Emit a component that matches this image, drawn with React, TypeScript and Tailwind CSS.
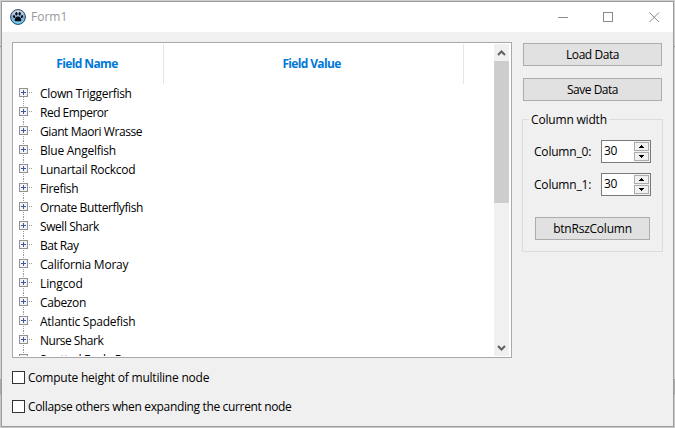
import React from "react";

const FISH = [
  { name: "Clown Triggerfish", cls: "tracking-[-0.31px]" },
  { name: "Red Emperor", cls: "tracking-[-0.5px]" },
  { name: "Giant Maori Wrasse", cls: "tracking-[-0.42px]" },
  { name: "Blue Angelfish", cls: "tracking-[-0.25px]" },
  { name: "Lunartail Rockcod", cls: "tracking-[-0.25px]" },
  { name: "Firefish", cls: "tracking-[-0.35px]" },
  { name: "Ornate Butterflyfish", cls: "tracking-[-0.4px]" },
  { name: "Swell Shark", cls: "tracking-[-0.43px]" },
  { name: "Bat Ray", cls: "tracking-[-0.5px]" },
  { name: "California Moray", cls: "tracking-[-0.25px]" },
  { name: "Lingcod", cls: "tracking-[-0.12px]" },
  { name: "Cabezon", cls: "tracking-[-0.37px]" },
  { name: "Atlantic Spadefish", cls: "tracking-[-0.25px]" },
  { name: "Nurse Shark", cls: "tracking-[-0.5px]" },
  { name: "Spotted Eagle Ray", cls: "tracking-[-0.35px]" },
];

function PawIcon() {
  return (
    <svg className="ml-2 h-4 w-4 shrink-0" viewBox="0 0 16 16">
      <defs>
        <linearGradient id="disc" x1="0" y1="0" x2="0" y2="1">
          <stop offset="0" stopColor="#dfe6f2" />
          <stop offset="0.5" stopColor="#86acd6" />
          <stop offset="1" stopColor="#6ad8f8" />
        </linearGradient>
      </defs>
      <circle cx="8" cy="8" r="7.4" fill="url(#disc)" stroke="#27405f" strokeWidth="1" />
      <g fill="#080c12">
        <ellipse cx="4.1" cy="7.6" rx="1.1" ry="1.5" transform="rotate(-25 4.1 7.6)" />
        <ellipse cx="6.4" cy="4.8" rx="1.2" ry="1.8" />
        <ellipse cx="9.7" cy="4.8" rx="1.2" ry="1.8" />
        <ellipse cx="12" cy="7.6" rx="1.1" ry="1.5" transform="rotate(25 12 7.6)" />
        <path d="M8 7.5c1.8 0 3.5 2.2 3.3 3.7-.2 1.6-2 1-3.3 1s-3.1.6-3.3-1C4.5 9.7 6.2 7.5 8 7.5z" />
      </g>
    </svg>
  );
}

function Button({ label, className }: { label: string; className: string }) {
  return (
    <button className={`flex items-center justify-center border border-[#adadad] bg-[#e1e1e1] ${className}`}>
      {label}
    </button>
  );
}

function TreeNode({ name, cls, first }: { name: string; cls: string; first: boolean }) {
  return (
    <div className="flex h-[19px] shrink-0">
      <svg className="ml-[5px] h-[19px] w-[21px] shrink-0" viewBox="0 0 21 19" shapeRendering="crispEdges">
        <path d={first ? "M4.5 13v6" : "M4.5 0v19"} stroke="#9a9a9a" strokeDasharray="1 1" />
        <path d="M10 8.5h4" stroke="#9a9a9a" strokeDasharray="1 1" />
        <rect x="0.5" y="4.5" width="8" height="8" fill="#f4f4f4" stroke="#919191" />
        <path d="M2 8.5h5M4.5 6v5" stroke="#3f58a6" />
      </svg>
      <span className={`leading-[19px] ${cls}`}>{name}</span>
    </div>
  );
}

function SpinRow({ label }: { label: string }) {
  return (
    <div className="flex h-[23px] items-center">
      <span className="w-[67px] pt-px tracking-[-0.2px]">{label}</span>
      <div className="flex h-[23px] w-[50px] border border-[#7a7a7a] bg-white">
        <span className="w-[32px] pl-[2px] leading-[20px] tracking-[-0.4px]">30</span>
        <div className="flex w-4 flex-col gap-px bg-[#f0f0f0] pt-px">
          <div className="flex h-[9px] w-[15px] items-center justify-center border border-[#adadad] bg-[#f0f0f0]">
            <svg width="5" height="3" shapeRendering="crispEdges"><path d="M2 0h1v1h1v1h1v1H0V2h1V1h1z" /></svg>
          </div>
          <div className="flex h-[9px] w-[15px] items-center justify-center border border-[#adadad] bg-[#f0f0f0]">
            <svg width="5" height="3" shapeRendering="crispEdges"><path d="M0 0h5v1H4v1H3v1H2V2H1V1H0z" /></svg>
          </div>
        </div>
      </div>
    </div>
  );
}

function Check({ label, className }: { label: string; className: string }) {
  return (
    <label className={`flex h-[17px] items-center gap-[3px] ${className}`}>
      <span className="h-[13px] w-[13px] border border-[#333333] bg-white" />
      <span>{label}</span>
    </label>
  );
}

export default function App() {
  return (
    <div className="h-[428px] w-[675px] overflow-hidden bg-[linear-gradient(#cfcfcf_0,#cfcfcf_46px,#8f8f8f_46px,#8f8f8f_47px,#d2d2d2_47px,#d2d2d2_379px,#aaaaaa_379px,#aaaaaa_395px,#c8c8c8_395px)] pl-px pt-px font-['Open_Sans','Noto_Sans',sans-serif] text-[12px] text-black">
      <div className="flex h-[426px] w-[673px] flex-col border border-[#9c9c9c] bg-[#f0f0f0]">
        <header className="flex h-[30px] shrink-0 items-center bg-white">
          <PawIcon />
          <span className="ml-[5px] text-[#999999]">Form1</span>
          <svg className="ml-auto mr-[13px] h-[11px] w-[102px]" viewBox="0 0 102 11" fill="none" stroke="#8a8a8a">
            <path d="M0 5.5h10" shapeRendering="crispEdges" />
            <rect x="45.5" y="0.5" width="9" height="9" shapeRendering="crispEdges" />
            <path d="M91.5 0.5l9.5 9.5M101 0.5l-9.5 9.5" />
          </svg>
        </header>
        <div className="flex">
          <main className="ml-[10px] mt-[10px] w-[500px]">
            <section className="flex h-[316px] border border-[#a9a9ad] bg-white p-px">
              <div className="flex h-[312px] w-[480px] flex-col overflow-hidden">
                <div className="flex h-10 shrink-0 font-bold text-[#0078d7]">
                  <div className="flex w-[150px] items-center justify-center border-r border-[#e5e5e5] pr-[3px] tracking-[-0.6px]">Field Name</div>
                  <div className="flex w-[300px] items-center justify-center border-r border-[#e5e5e5] pr-[4px] tracking-[-0.65px]">Field Value</div>
                </div>
                {FISH.map((f, i) => (
                  <TreeNode key={f.name} name={f.name} cls={f.cls} first={i === 0} />
                ))}
              </div>
              <div className="flex h-[312px] w-[15px] flex-col bg-[#f0f0f0]">
                <svg className="h-[17px] w-[15px] shrink-0" viewBox="0 0 15 17" fill="none" stroke="#606060" strokeWidth="2">
                  <path d="M4 11l3.5-3.5L11 11" />
                </svg>
                <div className="h-[142px] bg-[#cdcdcd]" />
                <svg className="mt-auto h-[17px] w-[15px] shrink-0" viewBox="0 0 15 17" fill="none" stroke="#606060" strokeWidth="2">
                  <path d="M4 7l3.5 3.5L11 7" />
                </svg>
              </div>
            </section>
            <Check className="mt-[11px] tracking-[-0.22px]" label="Compute height of multiline node" />
            <Check className="mt-3 tracking-[-0.35px]" label="Collapse others when expanding the current node" />
          </main>
          <aside className="ml-[11px] mt-[11px] w-[139px]">
            <Button label="Load Data" className="h-[23px] w-[139px] pt-px tracking-[-0.45px]" />
            <Button label="Save Data" className="mt-3 h-[23px] w-[139px] pt-px tracking-[-0.5px]" />
            <fieldset className="-ml-px mt-[10px] h-[141px] w-[141px] border border-[#dcdcdc] pl-[11px]">
              <legend className="-ml-[5px] h-[17px] px-[2px] leading-[18px] tracking-[-0.18px]">Column width</legend>
              <div className="flex flex-col gap-[10px] pt-3">
                <SpinRow label="Column_0:" />
                <SpinRow label="Column_1:" />
              </div>
              <Button label="btnRszColumn" className="ml-px mt-[21px] h-[23px] w-[115px] pt-px tracking-[-0.22px]" />
            </fieldset>
          </aside>
        </div>
      </div>
    </div>
  );
}
